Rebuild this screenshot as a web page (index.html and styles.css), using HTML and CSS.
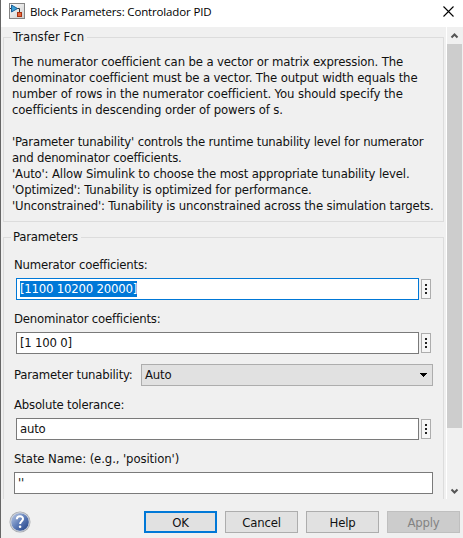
FILE: index.html
```
<!DOCTYPE html>
<html lang="en">
<head>
<meta charset="utf-8">
<title>Block Parameters: Controlador PID</title>
<link rel="stylesheet" href="styles.css">
</head>
<body>
<div class="dialog">
  <header class="titlebar">
    <svg class="app-icon" width="16" height="16" viewBox="0 0 16 16">
      <defs><linearGradient id="paper" x1="0" y1="0" x2="1" y2="1"><stop offset="0" stop-color="#fff"/><stop offset="1" stop-color="#ccc"/></linearGradient></defs>
      <rect x=".5" y=".5" width="15" height="15" fill="url(#paper)" stroke="#858585"/>
      <path d="M1 5.5h2M8 5.5h2.5V9" fill="none" stroke="#333"/>
      <path d="M2.500 2v7l6-3.500z" fill="#3ba0d8" stroke="#1c5f96"/>
      <rect x="8.500" y="9.500" width="4" height="4" fill="#e8673a" stroke="#a83212"/>
    </svg>
    <h1 class="title"><span class="t">Block Parameters: Controlador PID</span></h1>
    <svg class="close" width="11" height="11" viewBox="0 0 11 11"><path d="M.5.500l10 10M10.500.500l-10 10" stroke="#000" stroke-width="1.100"/></svg>
  </header>
  <div class="body">
    <main class="content">
      <section class="group about">
        <h2 class="legend"><span class="t">Transfer Fcn</span></h2>
        <p class="l1"><span class="t">The numerator coefficient can be a vector or matrix expression. The</span></p>
        <p class="l2"><span class="t">denominator coefficient must be a vector. The output width equals the</span></p>
        <p class="l3"><span class="t">number of rows in the numerator coefficient. You should specify the</span></p>
        <p class="l4 gap"><span class="t">coefficients in descending order of powers of s.</span></p>
        <p class="l5"><span class="t">'Parameter tunability' controls the runtime tunability level for numerator</span></p>
        <p class="l6"><span class="t">and denominator coefficients.</span></p>
        <p class="l7"><span class="t">'Auto': Allow Simulink to choose the most appropriate tunability level.</span></p>
        <p class="l8"><span class="t">'Optimized': Tunability is optimized for performance.</span></p>
        <p class="l9"><span class="t">'Unconstrained': Tunability is unconstrained across the simulation targets.</span></p>
      </section>
      <section class="group params">
        <h2 class="legend"><span class="t">Parameters</span></h2>
        <div class="label"><span class="t">Numerator coefficients:</span></div>
        <div class="row"><div class="field focus"><span class="selected t">[1100 10200 20000]</span></div><div class="more"><i></i><i></i><i></i></div></div>
        <div class="label"><span class="t">Denominator coefficients:</span></div>
        <div class="row"><div class="field"><span class="t">[1 100 0]</span></div><div class="more"><i></i><i></i><i></i></div></div>
        <div class="tune"><span class="tune-label"><span class="t">Parameter tunability:</span></span><div class="select"><span class="t">Auto</span><svg width="7" height="4" viewBox="0 0 7 4"><path d="M0 0h7v1H6v1H5v1H4v1H3V3H2V2H1V1H0z"/></svg></div></div>
        <div class="label"><span class="t">Absolute tolerance:</span></div>
        <div class="row"><div class="field"><span class="t">auto</span></div><div class="more"><i></i><i></i><i></i></div></div>
        <div class="label state"><span class="t">State Name: (e.g., 'position')</span></div>
        <div class="field wide"><span class="t">''</span></div>
      </section>
    </main>
    <div class="scrollbar">
      <svg width="15" height="17" viewBox="0 0 15 17"><path d="M4.500 10.500l3-3 3 3" fill="none" stroke="#555" stroke-width="2"/></svg>
      <div class="thumb"></div>
      <svg class="down" width="15" height="17" viewBox="0 0 15 17"><path d="M4.500 7.500l3 3 3-3" fill="none" stroke="#555" stroke-width="2"/></svg>
    </div>
  </div>
  <footer class="footer">
    <svg class="help" width="22" height="22" viewBox="0 0 22 22">
      <defs><linearGradient id="ball" x1="0" y1="0" x2="1" y2="1"><stop offset="0" stop-color="#c5d2ea"/><stop offset=".5" stop-color="#5f7db8"/><stop offset="1" stop-color="#1c3b80"/></linearGradient></defs>
      <circle cx="11" cy="11" r="10.500" fill="#a6a9af"/><circle cx="11" cy="11" r="9.300" fill="url(#ball)" stroke="#d4d8df"/>
      <path d="M7.800 8.200C8 4.300 14.300 4.500 14 8.200c-.2 2-2.900 2.300-2.900 4.700" fill="none" stroke="#fff" stroke-width="2"/><circle cx="11.100" cy="15.800" r="1.300" fill="#fff"/>
    </svg>
    <div class="button default"><span class="t">OK</span></div>
    <div class="button"><span class="t">Cancel</span></div>
    <div class="button"><span class="t">Help</span></div>
    <div class="button disabled"><span class="t">Apply</span></div>
  </footer>
</div>
</body>
</html>
```
FILE: styles.css
```
* { box-sizing: border-box; }
body { margin: 0; width: 463px; height: 538px; overflow: hidden; background: #f0f0f0; color: #111; font: 13px/16px "DejaVu Sans Condensed", "DejaVu Sans", sans-serif; font-stretch: condensed; letter-spacing: -0.2px; }
h1, h2, p { margin: 0; font-size: inherit; font-weight: normal; white-space: nowrap; }
.dialog { width: 463px; height: 538px; border-left: 1px solid #666; display: flex; flex-direction: column; }
.titlebar { height: 27px; flex: none; background: #fff; display: flex; align-items: flex-start; padding: 3px 9px 0 8px; }
.title { flex: 1; margin: 1px 0 0 5px; font: 11.5px/16px "Open Sans", "Noto Sans", sans-serif; letter-spacing: -0.15px; color: #000; }
.close { margin-top: 3px; }
.body { height: 472px; flex: none; display: flex; }
.content { width: 446px; flex: none; overflow: hidden; padding: 10px 2px 0; border-right: 1px solid #fff; }
.group { border: 1px solid #dcdcdc; width: 441px; }
.about { height: 185px; padding-left: 8px; }
.legend { width: max-content; background: #f0f0f0; margin: -9px 0 8px -1px; padding: 0 3px 0 2px; }
.gap { margin-bottom: 16px; }
.about .legend { margin-bottom: 9px; letter-spacing: 0; }
.l1 { letter-spacing: -0.14px; }
.l2, .l8 { letter-spacing: -0.13px; }
.l3 { letter-spacing: -0.095px; }
.l4 { letter-spacing: -0.125px; }
.l5 { letter-spacing: -0.185px; }
.l7 { letter-spacing: -0.16px; }
.l9 { letter-spacing: -0.155px; }
.params { margin-top: 15px; height: 280px; padding-left: 10px; }
.params .legend { margin-left: -3px; margin-bottom: 12px; }
.label { height: 16px; white-space: nowrap; }
.state { letter-spacing: -0.1px; }
.row { display: flex; gap: 2px; align-items: center; margin: 5px 0 11px 2px; }
.field { width: 403px; height: 22px; border: 1px solid #7a7a7a; background: #fff; padding: 2px 3px; white-space: nowrap; }
.field.focus { border-color: #0078d7; }
.field.wide { width: 419px; margin-top: 5px; }
.selected { background: #0078d7; color: #fff; display: inline-block; }
.more { width: 10px; height: 20px; border: 1px solid #adadad; background: #f5f5f5; display: flex; flex-direction: column; align-items: center; justify-content: center; gap: 2px; }
.more i { width: 2px; height: 2px; background: #222; }
.tune { display: flex; align-items: center; margin: -1px 0 11px; }
.tune-label { width: 127px; white-space: nowrap; }
.select { width: 292px; height: 22px; border: 1px solid #adadad; background: #e1e1e1; display: flex; align-items: center; justify-content: space-between; padding: 0 5px 0 3px; }
.scrollbar { width: 15px; flex: none; display: flex; flex-direction: column; background: #f0f0f0; }
.thumb { height: 384px; background: #cdcdcd; }
.down { margin-top: auto; }
.footer { flex: 1; display: flex; gap: 8px; padding: 12px 0 0 8px; }
.help { margin-right: 105px; }
.button { width: 73px; height: 22px; border: 1px solid #adadad; background: #e1e1e1; text-align: center; line-height: 21px; }
.default { border: 2px solid #0078d7; line-height: 19px; }
.disabled { background: #ccc; border-color: #bfbfbf; color: #838383; }
```
